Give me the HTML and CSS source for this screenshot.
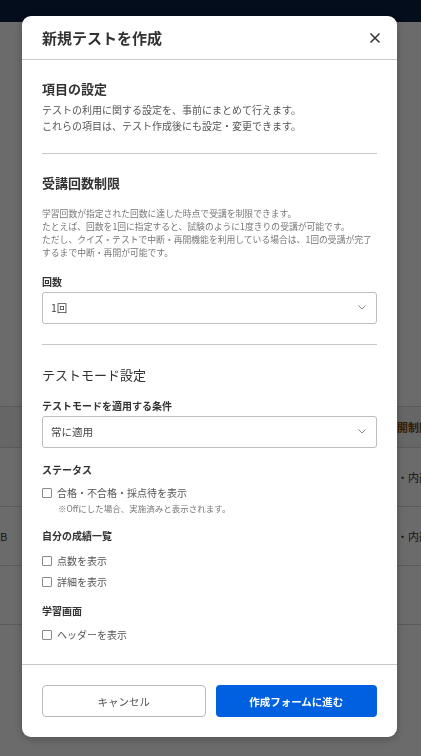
FILE: index.html
```html
<!doctype html>
<html lang="ja">
  <head>
    <meta charset="UTF-8" />
    <meta name="viewport" content="width=device-width, initial-scale=1.0" />
    <title>新規テストを作成</title>
    <link rel="stylesheet" href="styles.css">
  </head>
  <body>
    <div class="page">
      <div class="topbar"></div>
      <div class="page-space"></div>
      <div class="table">
        <div class="row row-head">
          <div class="cell-left"></div>
          <div class="cell-right head-text">開制限</div>
        </div>
        <div class="row row-tall">
          <div class="cell-left"></div>
          <div class="cell-right">・内部公開</div>
        </div>
        <div class="row row-tall">
          <div class="cell-left">B</div>
          <div class="cell-right">・内部公開</div>
        </div>
        <div class="row row-tall">
          <div class="cell-left"></div>
          <div class="cell-right"></div>
        </div>
      </div>
    </div>

    <!-- Modal -->
    <div class="overlay">
      <div class="modal">
        <div class="modal-header">
          <h1>新規テストを作成</h1>
          <button class="close-btn" type="button">
            <svg width="12" height="12" viewBox="0 0 12 12">
              <path d="M1.5 1.5 L10.5 10.5 M10.5 1.5 L1.5 10.5" stroke="#333" stroke-width="1.5" fill="none" />
            </svg>
          </button>
        </div>

        <div class="modal-body">
          <h2 class="section-title">項目の設定</h2>
          <p class="desc">テストの利用に関する設定を、事前にまとめて行えます。<br>これらの項目は、テスト作成後にも設定・変更できます。</p>
          <hr class="divider">

          <h2 class="section-title big">受講回数制限</h2>
          <p class="note-text">学習回数が指定された回数に達した時点で受講を制限できます。<br>たとえば、回数を1回に指定すると、試験のように1度きりの受講が可能です。<br>ただし、クイズ・テストで中断・再開機能を利用している場合は、1回の受講が完了<br>するまで中断・再開が可能です。</p>

          <label class="field-label first">回数</label>
          <div class="select">
            <span>1回</span>
            <svg width="8" height="5" viewBox="0 0 8 5">
              <path d="M0.5 0.5 L4 4 L7.5 0.5" stroke="#888" stroke-width="1" fill="none" />
            </svg>
          </div>
          <hr class="divider">

          <h2 class="section-title big light">テストモード設定</h2>
          <label class="field-label first">テストモードを適用する条件</label>
          <div class="select">
            <span>常に適用</span>
            <svg width="8" height="5" viewBox="0 0 8 5">
              <path d="M0.5 0.5 L4 4 L7.5 0.5" stroke="#888" stroke-width="1" fill="none" />
            </svg>
          </div>

          <label class="field-label group">ステータス</label>
          <div class="check-row first">
            <span class="box"></span>
            <span>合格・不合格・採点待を表示</span>
          </div>
          <p class="check-note">※Offにした場合、実施済みと表示されます。</p>

          <label class="field-label group">自分の成績一覧</label>
          <div class="check-row first-b">
            <span class="box"></span>
            <span>点数を表示</span>
          </div>
          <div class="check-row">
            <span class="box"></span>
            <span>詳細を表示</span>
          </div>

          <label class="field-label group-b">学習画面</label>
          <div class="check-row first-c">
            <span class="box"></span>
            <span>ヘッダーを表示</span>
          </div>
        </div>

        <div class="modal-footer">
          <button type="button" class="cancel-btn">キャンセル</button>
          <button type="button" class="next-btn">作成フォームに進む</button>
        </div>
      </div>
    </div>
  </body>
</html>
```

FILE: styles.css
```css
body {
  font-family: "Noto Sans CJK JP", "Noto Sans", sans-serif;
  margin: 0;
  background-color: #fff;
  color: #333;
  overflow: hidden;
}

/* page behind the modal */
.page {
  height: 756px;
}

.topbar {
  height: 22px;
  background-color: #0a1f43;
}

.page-space {
  height: 384px;
}

.table {
  border-top: 1px solid #d8d8d8;
}

.row {
  display: flex;
  align-items: center;
  border-bottom: 1px solid #d8d8d8;
  font-size: 11px;
  color: #333;
}

.row-head {
  height: 40px;
  background-color: #f4f4f4;
}

.row-tall {
  height: 58px;
}

.cell-left {
  flex: 1;
  padding-left: 0;
}

.cell-right {
  width: 24px;
  white-space: nowrap;
  overflow: hidden;
}

.head-text {
  font-weight: bold;
  color: #7a4300;
}

/* modal */
.overlay {
  position: fixed;
  top: 0;
  left: 0;
  width: 100%;
  height: 100%;
  background-color: rgba(0, 0, 0, 0.58);
  padding: 16px 0 0 22px;
  box-sizing: border-box;
}

.modal {
  width: 375px;
  height: 721px;
  background-color: #fff;
  border-radius: 9px;
  display: flex;
  flex-direction: column;
  overflow: hidden;
  box-shadow: 0 2px 10px rgba(0, 0, 0, 0.25);
}

.modal-header {
  height: 43px;
  border-bottom: 1px solid #c8c8c8;
  display: flex;
  align-items: center;
  justify-content: space-between;
  padding: 0 16px 0 20px;
}

.modal-header h1 {
  margin: 0;
  font-size: 15px;
  font-weight: bold;
  color: #333;
}

.close-btn {
  border: none;
  background: none;
  padding: 0;
  width: 12px;
  height: 12px;
  display: flex;
}

.modal-body {
  flex: 1;
  overflow: hidden;
  padding: 21px 20px 0;
}

.section-title {
  margin: 0;
  font-size: 13px;
  line-height: 16px;
  font-weight: bold;
  color: #333;
}

.section-title.big {
  line-height: 18px;
  margin-top: 20px;
  font-weight: 600;
}

.section-title.light {
  margin-top: 21px;
  font-weight: normal;
}

.desc {
  margin: 5px 0 0;
  font-size: 10px;
  line-height: 16px;
  color: #555;
}

.divider {
  border: none;
  border-top: 1px solid #c8c8c8;
  margin: 19px 0 0;
  height: 0;
}

.select + .divider {
  margin-top: 20px;
}

.note-text {
  margin: 15px 0 0;
  font-size: 8.8px;
  line-height: 13px;
  color: #777;
  white-space: nowrap;
}

.field-label {
  display: block;
  font-size: 10px;
  line-height: 14px;
  font-weight: bold;
  color: #333;
}

.field-label.first {
  margin-top: 15px;
}

.note-text + .field-label.first {
  margin-top: 15.5px;
}

.field-label.group {
  margin-top: 15px;
}

.field-label.group-b {
  margin-top: 14px;
}

.select {
  margin-top: 3px;
  height: 32px;
  box-sizing: border-box;
  border: 1px solid #bdbdbd;
  border-radius: 3px;
  display: flex;
  align-items: center;
  justify-content: space-between;
  padding: 0 10px 0 8px;
  font-size: 10.5px;
  color: #444;
}

.field-label + .select {
  margin-top: 3px;
}

.check-row {
  display: flex;
  align-items: center;
  gap: 5px;
  height: 16px;
  margin-top: 5px;
  font-size: 10px;
  color: #555;
}

.check-row.first {
  margin-top: 8px;
}

.check-row.first-b {
  margin-top: 10px;
}

.check-row.first-c {
  margin-top: 9px;
}

.box {
  width: 10px;
  height: 10px;
  box-sizing: border-box;
  border: 1px solid #8a8a8a;
  border-radius: 1px;
}

.check-note {
  margin: 1px 0 0 16px;
  font-size: 8.5px;
  line-height: 12px;
  color: #777;
}

.modal-footer {
  border-top: 1px solid #c8c8c8;
  padding: 20px 20px 20px;
  display: flex;
  gap: 10px;
}

.modal-footer button {
  flex: 1;
  height: 32px;
  border-radius: 4px;
  font-family: inherit;
  font-size: 10.5px;
  cursor: pointer;
}

.cancel-btn {
  background-color: #fff;
  border: 1px solid #bbb;
  color: #555;
}

.next-btn {
  background-color: #0060df;
  border: none;
  color: #fff;
  font-weight: bold;
}
```
